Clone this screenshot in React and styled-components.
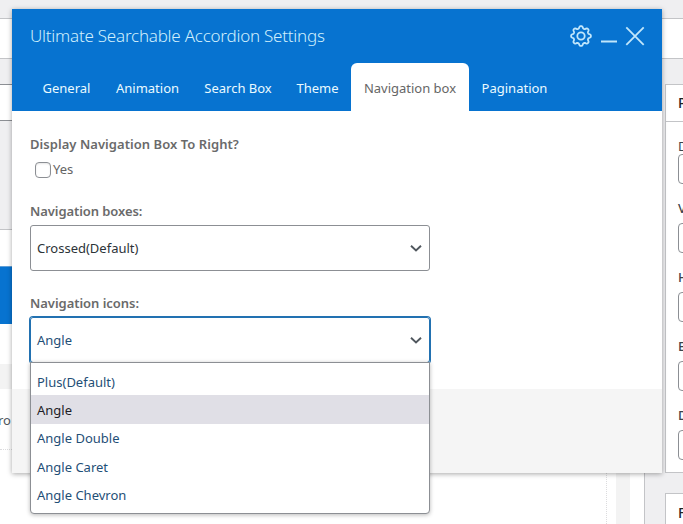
import React from 'react';
import styled, { createGlobalStyle } from 'styled-components';

const GlobalStyle = createGlobalStyle`
  * { box-sizing: border-box; }
  body {
    margin: 0;
    background: #efeff1;
    font: 13px/20px "Noto Sans", "Open Sans", sans-serif;
    color: #646464;
    overflow: hidden;
  }
`;

/* ---------- page behind the dialog ---------- */

const Page = styled.div`
  position: relative;
  height: 524px;
  overflow: hidden;
  display: flex;
  flex-direction: column;
  padding-top: 18px;
`;

const TopBar = styled.div`
  flex: none;
  height: 41px;
  background: #fff;
  border: solid #c3c4c7;
  border-width: 1px 0;
`;

const Columns = styled.div`
  flex: 1;
  display: grid;
  grid-template-columns: 645px 1fr;
  column-gap: 20px;
  padding-top: 25px;
`;

const Editor = styled.div`
  display: flex;
  flex-direction: column;
`;

const TitleField = styled.div`
  flex: none;
  height: 37px;
  background: #fff;
  border: solid #8c8f94;
  border-width: 1px 0;
  margin-bottom: 108px;
`;

const Canvas = styled.div`
  flex: 1;
  display: flex;
  flex-direction: column;
  background: #fff;
  border: solid #c3c4c7;
  border-width: 1px 1px 0 0;
`;

const BlueStrip = styled.div`
  flex: none;
  height: 58px;
  margin-top: 36px;
  background: #0773d0;
  border-top: 1px solid #5f9fd8;
`;

const Band = styled.div`
  flex: none;
  height: 25px;
  margin: 40px 0 20px;
  background: #f3f3f3;
`;

const ListArea = styled.div`
  flex: 1;
  display: grid;
  grid-template-columns: 607px 9px 14px 1fr;
`;

const ListCell = styled.div`
  border-right: 1px dotted #dcdcde;
`;

const ListRow = styled.div`
  height: 41px;
  line-height: 20px;
  padding-top: 1px;
  color: #50575e;
  border-bottom: 1px dotted #dcdcde;
  text-indent: -2px;
`;

const Rail = styled.div`
  grid-column: 3;
  background: #f3f3f3;
`;

const Sidebar = styled.div`
  display: flex;
  flex-direction: column;
  gap: 20px;
`;

const Panel = styled.section`
  flex: none;
  width: 280px;
  height: 389px;
  background: #fff;
  border: 1px solid #c3c4c7;
`;

const PanelTitle = styled.h2`
  margin: 0;
  height: 37px;
  padding-left: 12px;
  font-size: 14px;
  line-height: ${(p) => p.$line || 36}px;
  font-weight: 500;
  color: #1d2327;
  border-bottom: 1px solid #c3c4c7;
`;

const PanelBody = styled.div`
  display: flex;
  flex-direction: column;
  gap: 14px;
  padding: 14px 0 0 12px;
`;

const PanelField = styled.div`
  font-size: 13px;
  line-height: 20px;
  font-weight: ${(p) => (p.$strong ? 500 : 400)};
  color: #3c434a;
`;

const PanelInput = styled.div`
  height: 30px;
  margin-top: ${(p) => (p.$tight ? -2 : 5)}px;
  border: 1px solid #8c8f94;
  border-radius: 4px;
`;

/* ---------- dialog ---------- */

const Dialog = styled.div`
  position: absolute;
  left: 12px;
  top: 9px;
  width: 650px;
  height: 464px;
  display: flex;
  flex-direction: column;
  background: #fff;
  box-shadow: 0 1px 5px rgba(0, 0, 0, 0.35);
`;

const Header = styled.header`
  flex: none;
  height: 102px;
  display: flex;
  flex-direction: column;
  justify-content: space-between;
  background: #0773d0;
`;

const TitleRow = styled.div`
  height: 54px;
  display: flex;
  align-items: center;
  justify-content: space-between;
  padding: 0 17px 0 18px;
`;

const Title = styled.h1`
  margin: 0;
  font-size: 17px;
  line-height: 24px;
  font-weight: 300;
  letter-spacing: -0.23px;
  color: #d0effc;
`;

const Actions = styled.div`
  display: flex;
  align-items: center;
  gap: 8px;
  color: #c0e6fb;
  svg { display: block; }
  svg:first-child { margin-right: 1px; }
`;

const Tabs = styled.nav`
  display: flex;
  padding-left: 18px;
`;

const Tab = styled.div`
  width: ${(p) => p.$width}px;
  height: 48px;
  line-height: 51px;
  text-align: center;
  white-space: nowrap;
  border-radius: 6px 6px 0 0;
  color: ${(p) => (p.$active ? '#666' : '#eafaff')};
  background: ${(p) => (p.$active ? '#fff' : 'transparent')};
`;

const Body = styled.div`
  flex: 1;
  display: flex;
  flex-direction: column;
  padding: 23px 18px 0;
`;

const Label = styled.div`
  height: 20px;
  font-weight: 600;
  color: #6a6a6a;
  white-space: nowrap;
  letter-spacing: ${(p) => p.$tracking || 0}px;
`;

const CheckRow = styled.label`
  display: flex;
  align-items: center;
  gap: 2px;
  height: 20px;
  line-height: 18px;
  margin: 6px 0 21px 5px;
`;

const CheckBox = styled.span`
  width: 16px;
  height: 16px;
  border: 1px solid #8c8f94;
  border-radius: 4px;
  background: #fff;
  box-shadow: inset 0 1px 2px rgba(0, 0, 0, 0.1);
`;

const CheckText = styled.span`
  padding-bottom: 2px;
`;

const Select = styled.div`
  flex: none;
  display: flex;
  align-items: center;
  justify-content: space-between;
  width: 400px;
  height: 46px;
  margin: 4px 0 22px;
  padding: 0 7px 0 6px;
  border: 1px solid ${(p) => (p.$open ? '#2271b1' : '#8c8f94')};
  border-radius: 3px;
  box-shadow: ${(p) => (p.$open ? '0 0 0 1px #2271b1' : 'none')};
  color: ${(p) => (p.$open ? '#1f4f77' : '#2c3338')};
  svg { display: block; }
`;

const Footer = styled.footer`
  flex: none;
  height: 84px;
  background: #f5f5f5;
`;

const Menu = styled.ul`
  position: absolute;
  left: 18px;
  top: 353px;
  width: 400px;
  height: 152px;
  margin: 0;
  padding: 4px 0 0;
  list-style: none;
  background: #fff;
  border: 1px solid #8c8f94;
  border-radius: 0 0 4px 4px;
  box-shadow: 0 1px 4px rgba(0, 0, 0, 0.28);
`;

const Option = styled.li`
  height: ${(p) => p.$height}px;
  line-height: ${(p) => p.$line}px;
  padding-left: 6px;
  color: ${(p) => (p.$selected ? '#1e1e28' : '#1f4f77')};
  background: ${(p) => (p.$selected ? '#e0dfe6' : 'transparent')};
`;

/* ---------- icons ---------- */

const gearPath = (() => {
  const pts = [];
  for (let i = 0; i <= 96; i++) {
    const a = (i / 96) * Math.PI * 2;
    const r = 8.8 + 1.2 * Math.tanh(1.6 * Math.cos(8 * a));
    pts.push(`${(11 + r * Math.sin(a)).toFixed(2)} ${(11 - r * Math.cos(a)).toFixed(2)}`);
  }
  return `M${pts.join('L')}Z`;
})();

const GearIcon = () => (
  <svg width="22" height="22" viewBox="0 0 22 22" fill="none" stroke="currentColor" strokeWidth="1.8" strokeLinejoin="round">
    <path d={gearPath} />
    <circle cx="11" cy="11" r="3.7" />
  </svg>
);

const MinimizeIcon = () => (
  <svg width="16" height="22" viewBox="0 0 16 22" stroke="currentColor" strokeWidth="2">
    <path d="M0 16.5H16" />
  </svg>
);

const CloseIcon = () => (
  <svg width="20" height="20" viewBox="0 0 20 20" fill="none" stroke="currentColor" strokeWidth="1.8">
    <path d="M1.3 1.3L18.7 18.9M18.7 1.3L1.3 18.9" />
  </svg>
);

const Chevron = () => (
  <svg width="12" height="8" viewBox="0 0 12 8" fill="none" stroke="#50575e" strokeWidth="1.9">
    <path d="M1 1.8L6 6.5L11 1.8" />
  </svg>
);

/* ---------- data ---------- */

const tabs = [
  ['General', 73],
  ['Animation', 89],
  ['Search Box', 92],
  ['Theme', 67],
  ['Navigation box', 118],
  ['Pagination', 91],
];

const options = [
  ['Plus(Default)', 28, 30],
  ['Angle', 29, 30],
  ['Angle Double', 28, 28],
  ['Angle Caret', 28, 30],
  ['Angle Chevron', 28, 30],
];

const fields = ['D', 'V', 'H', 'E', 'D'];

export default function App() {
  return (
    <>
      <GlobalStyle />
      <Page>
        <TopBar />
        <Columns>
          <Editor>
            <TitleField />
            <Canvas>
              <BlueStrip />
              <Band />
              <ListArea>
                <ListCell>
                  <ListRow>ro</ListRow>
                </ListCell>
                <Rail />
              </ListArea>
            </Canvas>
          </Editor>
          <Sidebar>
            <Panel>
              <PanelTitle>P</PanelTitle>
              <PanelBody>
                {fields.map((f, i) => (
                  <PanelField key={i} $strong={i > 0}>
                    {f}
                    <PanelInput $tight={i === 0} />
                  </PanelField>
                ))}
              </PanelBody>
            </Panel>
            <Panel>
              <PanelTitle $line={38}>F</PanelTitle>
            </Panel>
          </Sidebar>
        </Columns>

        <Dialog>
          <Header>
            <TitleRow>
              <Title>Ultimate Searchable Accordion Settings</Title>
              <Actions>
                <GearIcon />
                <MinimizeIcon />
                <CloseIcon />
              </Actions>
            </TitleRow>
            <Tabs>
              {tabs.map(([name, width]) => (
                <Tab key={name} $width={width} $active={name === 'Navigation box'}>
                  {name}
                </Tab>
              ))}
            </Tabs>
          </Header>
          <Body>
            <Label $tracking={0.05}>Display Navigation Box To Right?</Label>
            <CheckRow>
              <CheckBox />
              <CheckText>Yes</CheckText>
            </CheckRow>
            <Label $tracking={-0.08}>Navigation boxes:</Label>
            <Select>
              Crossed(Default)
              <Chevron />
            </Select>
            <Label $tracking={-0.04}>Navigation icons:</Label>
            <Select $open>
              Angle
              <Chevron />
            </Select>
          </Body>
          <Footer />
          <Menu>
            {options.map(([name, height, line]) => (
              <Option key={name} $height={height} $line={line} $selected={name === 'Angle'}>
                {name}
              </Option>
            ))}
          </Menu>
        </Dialog>
      </Page>
    </>
  );
}
